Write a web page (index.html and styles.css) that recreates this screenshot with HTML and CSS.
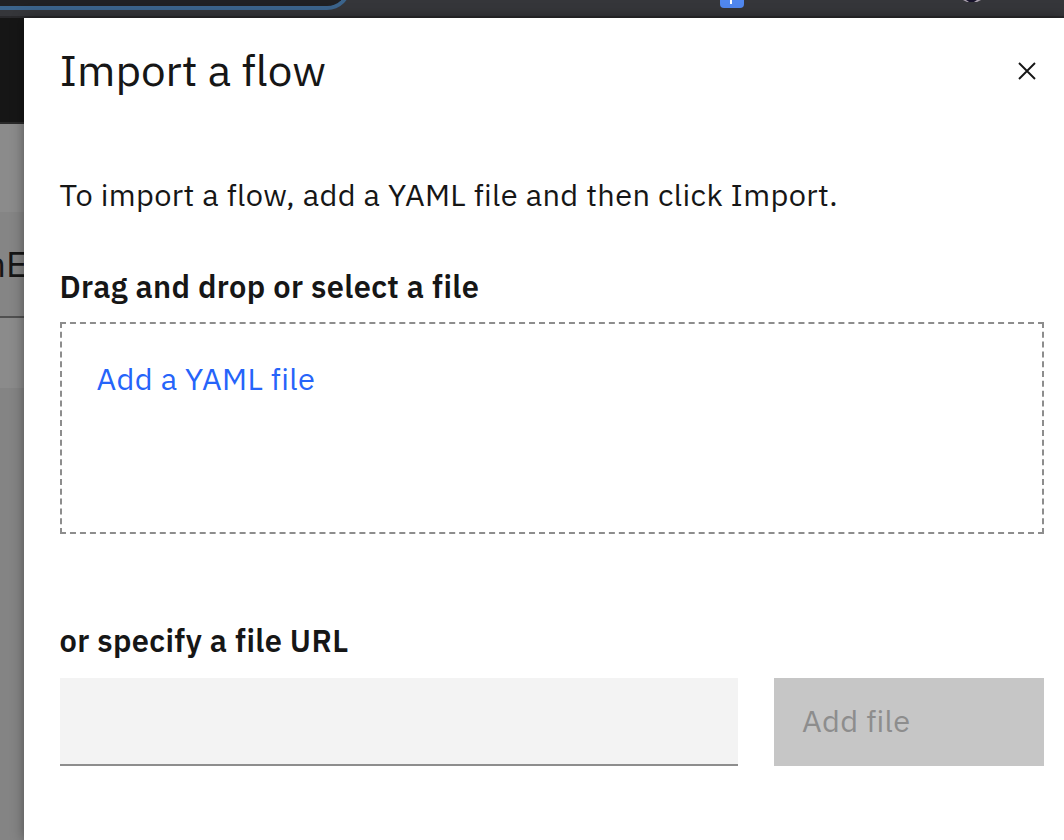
FILE: index.html
```html
<!DOCTYPE html>
<html lang="en">
<head>
<meta charset="utf-8">
<title>Import a flow</title>
<link rel="stylesheet" href="styles.css">
</head>
<body>
<div class="window">
  <header class="browser-bar">
    <div class="address-bar"></div>
    <div class="extension"><span></span></div>
    <svg class="avatar" width="20" height="3" viewBox="0 0 20 3"><path d="M1 0H19L15 2H5Z" fill="#aaa1ae"/><path d="M4 0H15L12 2H7Z" fill="#17132b"/></svg>
  </header>
  <div class="workspace">
    <div class="backdrop">
      <div class="app-header"></div>
      <div class="app-toolbar"></div>
      <div class="app-title">nE</div>
      <div class="app-row"></div>
    </div>
    <main class="panel">
      <div class="panel-head">
        <h1 class="title">Import a flow</h1>
        <button class="close" aria-label="Close"><svg width="18" height="18" viewBox="0 0 18 18"><path d="M1 1L17 17M17 1L1 17" fill="none" stroke="#161616" stroke-width="1.9"/></svg></button>
      </div>
      <p class="intro">To import a flow, add a YAML file and then click Import.</p>
      <h2 class="label drop-label">Drag and drop or select a file</h2>
      <div class="dropzone"><a class="add-link">Add a YAML file</a></div>
      <h2 class="label url-label">or specify a file URL</h2>
      <div class="url-row">
        <input class="url-input" aria-label="File URL">
        <button class="add-button" disabled>Add file</button>
      </div>
    </main>
  </div>
</div>
</body>
</html>
```
FILE: styles.css
```css
* { box-sizing: border-box; }
body { margin: 0; font-family: "IBM Plex Sans", "Open Sans", "Noto Sans", sans-serif; color: #161616; font-variant-ligatures: none; }
h1, h2, p { margin: 0; white-space: nowrap; }
button { border: 0; padding: 0; font: inherit; }
svg { display: block; }
.window { width: 1064px; height: 840px; overflow: hidden; display: flex; flex-direction: column; }
.browser-bar { height: 18px; flex: none; display: flex; align-items: flex-start; background: #35363a; border-bottom: 2px solid #29292c; }
.address-bar { width: 351px; height: 60px; margin-top: -50px; flex: none; background: #202124; border: solid #3b648c; border-width: 0 4px 4px 0; border-bottom-right-radius: 24px; }
.extension { width: 24px; height: 8px; margin-left: 369px; background: #5087ee; border-radius: 0 0 4px 4px; display: flex; justify-content: center; }
.extension span { width: 2px; height: 4px; margin-right: 2px; background: #fff; }
.avatar { margin-left: 218px; }
.workspace { flex: 1; display: flex; }
.backdrop { width: 24px; flex: none; background: #848484; overflow: hidden; }
.app-header { height: 106px; background: #161616; border-bottom: 2px solid #292929; }
.app-toolbar { height: 88px; background: #8b8b8b; }
.app-title { height: 106px; display: flex; justify-content: flex-end; margin-right: -3px; background: #858585; border-bottom: 2px solid #505050; font: 36px/104px "IBM Plex Sans", sans-serif; }
.app-row { height: 70px; background: #8b8b8b; }
.panel { flex: 1; padding: 0 20px 0 36px; background: #fff; box-shadow: 0 0 12px rgba(0, 0, 0, .4); position: relative; }
.panel-head { height: 106px; display: flex; justify-content: space-between; align-items: center; }
.title { font-size: 44px; line-height: 60px; font-weight: 400; margin: -2px 0 0 -.6px; }
.close { width: 18px; height: 18px; margin-right: 8px; background: none; }
.intro { margin: 50px 0 0 -.5px; font-size: 30.8px; line-height: 40px; letter-spacing: .352px; }
.label { margin-left: -.5px; font-size: 30.8px; line-height: 40px; font-weight: 600; letter-spacing: .352px; }
.drop-label { margin-top: 52px; }
.dropzone { height: 212px; margin-top: 16px; padding: 34px 34.5px; border: 2px dashed #8d8d8d; }
.add-link { display: block; font-size: 30.8px; line-height: 40px; letter-spacing: .352px; color: #2664fa; }
.url-label { margin-top: 86px; }
.url-row { display: flex; gap: 36px; margin-top: 18px; }
.url-input { width: 678px; height: 88px; border: 0; border-bottom: 2px solid #8d8d8d; border-radius: 0; background: #f3f3f3; }
.add-button { width: 270px; height: 88px; padding: 0 0 4px 28px; background: #c6c6c6; color: #8d8d8d; font-size: 30.8px; letter-spacing: .352px; text-align: left; }
```
